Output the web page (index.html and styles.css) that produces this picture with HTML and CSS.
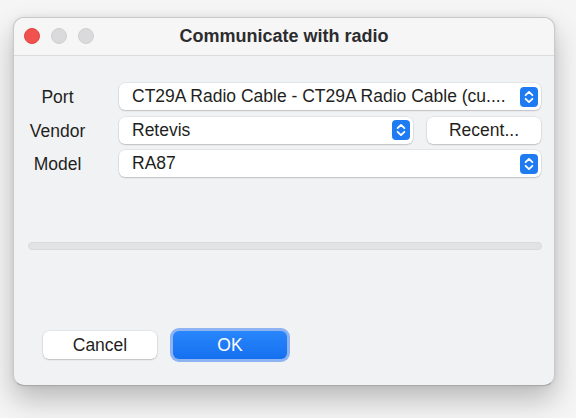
FILE: index.html
```html
<!DOCTYPE html>
<html>
<head>
<meta charset="utf-8">
<link rel="stylesheet" href="styles.css">
</head>
<body>
<div class="window">
  <div class="titlebar">
    <div class="lights">
      <span class="light red"></span>
      <span class="light gray"></span>
      <span class="light gray"></span>
    </div>
    <div class="title">Communicate with radio</div>
  </div>
  <div class="content">
    <div class="form">
      <div class="label">Port</div>
      <div class="popup">
        <span class="ptext">CT29A Radio Cable - CT29A Radio Cable (cu....</span>
        <svg class="stepper" viewBox="0 0 18 20" width="18" height="20"><rect width="18" height="20" rx="4" fill="#1f7bf2"/><path d="M5.6 8.2 L9 4.9 L12.4 8.2 M5.6 11.8 L9 15.1 L12.4 11.8" fill="none" stroke="#fff" stroke-width="1.8" stroke-linecap="round" stroke-linejoin="round"/></svg>
      </div>
      <div class="label">Vendor</div>
      <div class="vrow">
        <div class="popup vendor">
          <span class="ptext">Retevis</span>
          <svg class="stepper" viewBox="0 0 18 20" width="18" height="20"><rect width="18" height="20" rx="4" fill="#1f7bf2"/><path d="M5.6 8.2 L9 4.9 L12.4 8.2 M5.6 11.8 L9 15.1 L12.4 11.8" fill="none" stroke="#fff" stroke-width="1.8" stroke-linecap="round" stroke-linejoin="round"/></svg>
        </div>
        <div class="btn recent">Recent...</div>
      </div>
      <div class="label">Model</div>
      <div class="popup">
        <span class="ptext">RA87</span>
        <svg class="stepper" viewBox="0 0 18 20" width="18" height="20"><rect width="18" height="20" rx="4" fill="#1f7bf2"/><path d="M5.6 8.2 L9 4.9 L12.4 8.2 M5.6 11.8 L9 15.1 L12.4 11.8" fill="none" stroke="#fff" stroke-width="1.8" stroke-linecap="round" stroke-linejoin="round"/></svg>
      </div>
    </div>
    <div class="progress"></div>
    <div class="buttons">
      <div class="btn cancel">Cancel</div>
      <div class="okring"><div class="btn ok">OK</div></div>
    </div>
  </div>
</div>
</body>
</html>
```
FILE: styles.css
```css
html, body {
  margin: 0;
  padding: 0;
}
body {
  width: 576px;
  height: 418px;
  background: #f5f5f5;
  font-family: "Liberation Sans", Arial, sans-serif;
  color: #1f1f21;
  overflow: hidden;
}
.window {
  box-sizing: border-box;
  margin: 17px 0 0 13px;
  width: 542px;
  height: 369px;
  background: #f1f2f4;
  border: 1px solid #c9c9cb;
  border-bottom-color: #a8a8a8;
  border-radius: 11px;
  box-shadow: 0 14px 28px rgba(0,0,0,0.24), 0 0 6px rgba(0,0,0,0.08);
  overflow: hidden;
}
.titlebar {
  position: relative;
  height: 37px;
  background: #f6f6f7;
  border-bottom: 1px solid #dcdcde;
  display: flex;
  align-items: center;
  justify-content: center;
}
.lights {
  position: absolute;
  left: 10px;
  top: 10px;
  display: flex;
  gap: 11px;
}
.light {
  width: 16px;
  height: 16px;
  border-radius: 50%;
  box-sizing: border-box;
}
.red {
  background: #f0524e;
  border: 1px solid #e2443f;
}
.gray {
  background: #dadadc;
  border: 1px solid #cfcfd1;
}
.title {
  font-weight: bold;
  font-size: 18px;
  color: #2c2c2e;
}
.content {
  padding: 27px 13px 0 12px;
}
.form {
  display: grid;
  grid-template-columns: 63px 422px;
  column-gap: 30px;
  row-gap: 6.5px;
  font-size: 17.5px;
}
.label {
  height: 27px;
  line-height: 28px;
  text-align: center;
}
.popup {
  position: relative;
  height: 27px;
  box-sizing: border-box;
  background: #fff;
  border-radius: 6px;
  box-shadow: 0 0 0 0.5px rgba(0,0,0,0.1), 0 1px 1.5px rgba(0,0,0,0.16);
  display: flex;
  align-items: center;
  padding: 0 3px 0 13px;
}
.ptext {
  flex: 1;
  white-space: nowrap;
  overflow: hidden;
}
.stepper {
  display: block;
  flex: none;
}
.vrow {
  display: flex;
  gap: 14px;
}
.vendor {
  width: 294px;
}
.btn {
  box-sizing: border-box;
  height: 27px;
  background: #fff;
  border-radius: 6px;
  box-shadow: 0 0 0 0.5px rgba(0,0,0,0.1), 0 1px 1.5px rgba(0,0,0,0.16);
  display: flex;
  align-items: center;
  justify-content: center;
}
.recent {
  flex: 1;
}
.progress {
  margin: 65px 0 0 2px;
  width: 514px;
  height: 8px;
  box-sizing: border-box;
  background: #e2e3e5;
  border: 1px solid #d9dadc;
  border-radius: 4px;
}
.buttons {
  display: flex;
  align-items: center;
  gap: 13px;
  margin: 78px 0 0 17px;
  font-size: 17.5px;
}
.cancel {
  width: 114px;
  height: 28px;
}
.okring {
  padding: 3px;
  border-radius: 9px;
  background: #8db3f3;
}
.ok {
  width: 114px;
  height: 28px;
  background: linear-gradient(#2a86fb, #1470ef);
  color: #fff;
  box-shadow: none;
}
```
